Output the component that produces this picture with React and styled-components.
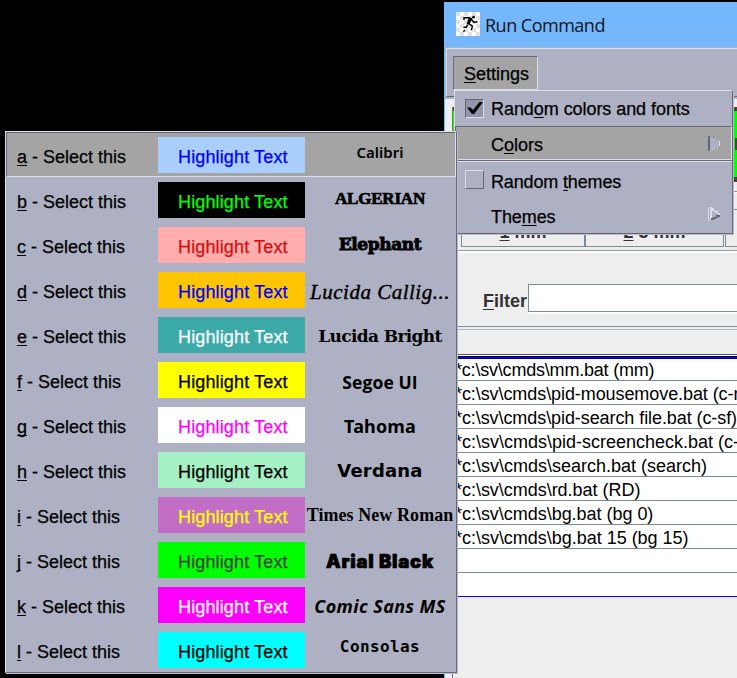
import React from 'react';
import styled, { createGlobalStyle } from 'styled-components';

const GlobalStyle = createGlobalStyle`
  * { box-sizing: border-box; }
  html, body { margin: 0; padding: 0; background: #000; overflow: hidden; }
`;

const face = '#aeb1c3';
const light = '#dcdde6';
const dark = '#666877';
const steel = '#7a8a99';

const Desktop = styled.main`
  position: relative;
  width: 737px;
  height: 678px;
  overflow: hidden;
  background: #000;
  color: #000;
  font: 18px/20px "Liberation Sans", Arial, sans-serif;
  white-space: pre;
`;

const AppWindow = styled.section`
  position: absolute;
  left: 444px;
  top: 2px;
  width: 320px;
  height: 690px;
  display: flex;
  flex-direction: column;
  border-left: 1px solid #74b7fd;
  background: #eee;
`;

const TitleBar = styled.header`
  flex: 0 0 45px;
  display: flex;
  align-items: flex-start;
  gap: 5px;
  padding: 10px 0 0 11px;
  background: #74b7fd;
`;

const Title = styled.span`
  margin-top: 1px;
  font: 18px/24px "Open Sans", sans-serif;
  letter-spacing: -0.5px;
  color: #10151c;
`;

const MenuBar = styled.nav`
  flex: 0 0 52px;
  padding: 1px 0 2px 1px;
  background: ${face};
`;

const MenuBarInner = styled.div`
  height: 49px;
  padding: 7px 0 0 6px;
  border-top: 1px solid ${light};
  border-left: 1px solid ${light};
  border-bottom: 1px solid ${dark};
`;

const MenuButton = styled.div`
  width: 85px;
  height: 34px;
  padding: 7px 0 0 10px;
  border: 1px solid;
  border-color: ${dark} ${light} ${light} ${dark};
  background: #a4a4a4;
  -webkit-text-stroke: 0.25px;
`;

const Mnemonic = styled.span`
  text-decoration: underline 1px;
  text-underline-offset: 2px;
  text-decoration-skip-ink: none;
`;

const Body = styled.div`
  flex: 1;
  margin: 8px 0 0 7px;
  border-left: 1px solid #777;
  display: flex;
  flex-direction: column;
`;

const CommandBand = styled.div`
  flex: 0 0 75px;
  display: flex;
  align-items: center;
  padding-left: 282px;
  background: #00ff00;
  border-top: 4px solid #444;
  border-bottom: 5px solid #444;
`;

const BandField = styled.div`
  width: 40px;
  height: 12px;
  background: #444;
`;

const ButtonRow = styled.div`
  flex: 0 0 60px;
  margin-top: 9px;
  padding: 17px 0 0 8px;
  display: flex;
  border-top: 1px solid #999;
  border-bottom: 1px solid #999;
  box-shadow: inset 0 1px #fff, 0 2px #fff;
`;

const GroupButton = styled.button`
  flex: 0 0 ${p => p.$width}px;
  height: 38px;
  margin: 0 ${p => p.$gap || 0}px 0 0;
  padding: 8px 0 0;
  border: 1px solid ${steel};
  background: #eee;
  color: #333;
  font: bold 18px/20px "Liberation Sans", Arial, sans-serif;
`;

const FilterRow = styled.label`
  flex: 0 0 74px;
  display: flex;
  align-items: flex-start;
  padding: 31px 0 0 30px;
  margin-top: 2px;
  border-bottom: 1px solid ${steel};
  color: #333;
  font-weight: bold;
`;

const FilterText = styled.span`
  width: 45px;
  margin-top: 7px;
`;

const FilterField = styled.span`
  width: 230px;
  height: 28px;
  border: 1px solid ${steel};
  background: #fff;
  box-shadow: 0 2px #fff;
`;

const TableHead = styled.div`
  flex: 0 0 26px;
  margin-top: 2px;
  border-top: 1px solid #aeb8c5;
  border-bottom: 1px solid #555;
`;

const Table = styled.div`
  margin-top: 1px;
  border-top: 1px solid #000;
  border-bottom: 1px solid #0000ff;
  background: #fff;
  box-shadow: inset 0 2px #0000f0, 0 -1px #fff;
`;

const TableRow = styled.div`
  height: 24px;
  padding: 3px 0 0 2px;
  border-bottom: 1px solid ${steel};
  letter-spacing: ${p => p.$track}px;
  &:last-child { height: 23px; border-bottom: 0; }
`;

const Popup = styled.div`
  position: absolute;
  left: ${p => p.$x}px;
  top: ${p => p.$y}px;
  width: ${p => p.$w}px;
  height: ${p => p.$h}px;
  border: 1px solid;
  border-color: ${light} ${dark} ${dark} ${light};
  box-shadow: 1px 1px #b9bbc8;
  background: ${face};
  -webkit-text-stroke: 0.25px;
`;

const MenuItem = styled.div`
  height: ${p => p.$h}px;
  display: flex;
  align-items: center;
  padding: 0 10px 0 9px;
  border: 1px solid;
  border-color: ${p => (p.$active ? `${dark} ${light} ${light} ${dark}` : 'transparent')};
  background: ${p => (p.$active ? '#a4a4a4' : 'transparent')};
`;

const MenuLabel = styled.span`
  flex: 1;
  padding-top: ${p => p.$drop || 0}px;
  letter-spacing: ${p => p.$track || 0}px;
`;

const CheckSlot = styled.span`
  flex: 0 0 26px;
  height: 20px;
`;

const CheckBox = styled.span`
  display: block;
  width: 19px;
  height: 19px;
  border: 1px solid;
  border-color: ${p => (p.$on ? `${dark} ${light} ${light} ${dark}` : `${light} ${dark} ${dark} ${light}`)};
  background: ${p => (p.$on ? '#9294a7' : face)};
  svg { display: block; }
`;

const Separator = styled.div`
  height: 2px;
  border-top: 1px solid ${dark};
  border-bottom: 1px solid ${light};
`;

const SchemeRow = styled.div`
  height: 45px;
  display: grid;
  grid-template-columns: 151px 147px 150px;
  padding-top: 4px;
  border: 1px solid;
  border-color: ${p => (p.$active ? `${dark} ${light} ${light} ${dark}` : 'transparent')};
  background: ${p => (p.$active ? '#a4a4a4' : 'transparent')};
`;

const SchemeName = styled.span`
  padding: 10px 0 0 10px;
`;

const Swatch = styled.span`
  height: 36px;
  padding: 10px 0 0 20px;
  background: ${p => p.$bg};
  color: ${p => p.$fg};
  letter-spacing: 0.14px;
`;

const FontSample = styled.span`
  height: 36px;
  display: flex;
  justify-content: center;
  padding-top: ${p => p.$top}px;
  font: ${p => p.$font};
  letter-spacing: ${p => p.$track}px;
  -webkit-text-stroke: ${p => p.$stroke || 0}px;
`;

const RunnerIcon = () => (
  <svg width="24" height="24" viewBox="0 0 24 24">
    <defs>
      <pattern id="check" width="8" height="8" patternUnits="userSpaceOnUse">
        <rect width="8" height="8" fill="#fff" />
        <rect width="4" height="4" fill="#e2e2e2" />
        <rect x="4" y="4" width="4" height="4" fill="#e2e2e2" />
      </pattern>
    </defs>
    <rect width="24" height="24" fill="url(#check)" />
    <circle cx="17.6" cy="5.2" r="1.4" />
    <path d="M8 8V5.8h5l3 1M15.5 7.5l2.3 2.8 3.7-.6M12.5 11.5l4 2.6-1.3 4.2M11.5 12.5 10.5 15.3H7.5M9 18.3l-1.8 1.2" fill="none" stroke="#000" strokeWidth="1.4" />
    <path d="m12.5 6 4 .5-3.2 6-2.6-.5z" />
  </svg>
);

const Tick = () => (
  <svg width="17" height="17" viewBox="0 0 17 17">
    <path d="M1 7.5h3.5L7 10l6.5-8H17L8 14H6z" fill="#000" />
  </svg>
);

const Arrow = ({ active }) => (
  <svg width="13" height="15" viewBox="0 0 13 15" shapeRendering="crispEdges">
    {active ? (
      <>
        <path d="M0 0h3v1h3v1h3v1h2v2h1v5h-1v1H9v1H6v1H3v2H0z" fill={face} />
        <path d="M0 0h2v15H0zM5 1h1v1H5zM8 3h1v1H8z" fill={dark} />
        <path d="M2 14h1v1H2zM4 13h1v1H4zM6 12h1v1H6zM9 11h1v1H9zM11 5h1v5h-1z" fill={light} />
      </>
    ) : (
      <>
        <path d="M0 0h1v14H0zM2 0h2v1h2v2h2v1h2v2h2v2H2z" fill={light} />
        <path d="M2 6h5v3H4v4H2z" fill={light} />
        <path d="M4 4h3v2h3v2H7v2H4z" fill={face} />
        <path d="M3 11h2v-1h3V8h4v2h-2v1H8v1H6v1H3z" fill={dark} />
      </>
    )}
  </svg>
);

const commands = [
  { text: '*c:\\sv\\cmds\\mm.bat (mm)', track: -0.2 },
  { text: '*c:\\sv\\cmds\\pid-mousemove.bat (c-m)', track: -0.08 },
  { text: '*c:\\sv\\cmds\\pid-search file.bat (c-sf)', track: -0.08 },
  { text: '*c:\\sv\\cmds\\pid-screencheck.bat (c-s)', track: 0 },
  { text: '*c:\\sv\\cmds\\search.bat (search)', track: 0 },
  { text: '*c:\\sv\\cmds\\rd.bat (RD)', track: -0.03 },
  { text: '*c:\\sv\\cmds\\bg.bat (bg 0)', track: -0.03 },
  { text: '*c:\\sv\\cmds\\bg.bat 15 (bg 15)', track: -0.02 },
  { text: '', track: 0 },
  { text: '', track: 0 },
];

const schemes = [
  { k: 'a', bg: '#aacfff', fg: '#0000ff', name: 'Calibri', font: '600 15px/20px "Noto Sans", sans-serif', top: 5, track: 0 },
  { k: 'b', bg: '#000', fg: '#00ff00', name: 'ALGERIAN', font: 'bold 17px/20px "Liberation Serif", serif', top: 7, track: -0.2, stroke: 0.7 },
  { k: 'c', bg: '#ffadad', fg: '#d31010', name: 'Elephant', font: '900 17px/20px "DejaVu Serif", serif', top: 7, track: -0.4, stroke: 0.9 },
  { k: 'd', bg: '#ffc600', fg: '#0000ff', name: 'Lucida Callig...', font: 'italic 21px/22px "Liberation Serif", serif', top: 9, track: 0.5, stroke: 0.4 },
  { k: 'e', bg: '#3caaa8', fg: '#fff', name: 'Lucida Bright', font: 'bold 17px/20px "DejaVu Serif", serif', top: 9, track: -0.65 },
  { k: 'f', bg: '#ffff00', fg: '#000', name: 'Segoe UI', font: 'bold 17.5px/20px "Open Sans", sans-serif', top: 10, track: 0.1 },
  { k: 'g', bg: '#fff', fg: '#ff00ff', name: 'Tahoma', font: 'bold 18px/20px "Noto Sans", sans-serif', top: 9, track: 0.15 },
  { k: 'h', bg: '#a5f0c4', fg: '#000', name: 'Verdana', font: 'bold 18px/20px "DejaVu Sans", sans-serif', top: 9, track: 0.2 },
  { k: 'i', bg: '#c26dc6', fg: '#ffff00', name: 'Times New Roman', font: 'bold 18px/20px "Liberation Serif", serif', top: 8, track: 0.07 },
  { k: 'j', bg: '#00ff00', fg: '#444', name: 'Arial Black', font: '900 18.5px/20px Inter, sans-serif', top: 9, track: 0.75, stroke: 0.7 },
  { k: 'k', bg: '#ff00ff', fg: '#fff', name: 'Comic Sans MS', font: 'italic bold 18px/20px "Open Sans", sans-serif', top: 9, track: 0.4 },
  { k: 'l', bg: '#00ffff', fg: '#000', name: 'Consolas', font: 'bold 16px/20px "DejaVu Sans Mono", monospace', top: 5, track: 0.4 },
];

export default function App() {
  return (
    <Desktop>
      <GlobalStyle />
      <AppWindow>
        <TitleBar><RunnerIcon /><Title>Run Command</Title></TitleBar>
        <MenuBar>
          <MenuBarInner>
            <MenuButton><Mnemonic>S</Mnemonic>ettings</MenuButton>
          </MenuBarInner>
        </MenuBar>
        <Body>
          <CommandBand><BandField /></CommandBand>
          <ButtonRow>
            <GroupButton $width={124}><Mnemonic>1</Mnemonic> mm</GroupButton>
            <GroupButton $width={139} $gap={1}><Mnemonic>2</Mnemonic> 3 mm</GroupButton>
            <GroupButton $width={124} />
          </ButtonRow>
          <FilterRow>
            <FilterText><Mnemonic>F</Mnemonic>ilter</FilterText>
            <FilterField />
          </FilterRow>
          <TableHead />
          <Table>
            {commands.map((c, i) => <TableRow key={i} $track={c.track}>{c.text}</TableRow>)}
          </Table>
        </Body>
      </AppWindow>

      <Popup $x={454} $y={90} $w={279} $h={144}>
        <MenuItem $h={35}>
          <CheckSlot><CheckBox $on><Tick /></CheckBox></CheckSlot>
          <MenuLabel $drop={1} $track={-0.06}>Rand<Mnemonic>o</Mnemonic>m colors and fonts</MenuLabel>
        </MenuItem>
        <MenuItem $h={34} $active>
          <CheckSlot />
          <MenuLabel $drop={3}>C<Mnemonic>o</Mnemonic>lors</MenuLabel>
          <Arrow active />
        </MenuItem>
        <Separator />
        <MenuItem $h={35}>
          <CheckSlot><CheckBox /></CheckSlot>
          <MenuLabel $drop={4} $track={-0.15}>Random <Mnemonic>t</Mnemonic>hemes</MenuLabel>
        </MenuItem>
        <MenuItem $h={35}>
          <CheckSlot />
          <MenuLabel $drop={4} $track={-0.1}>The<Mnemonic>m</Mnemonic>es</MenuLabel>
          <Arrow />
        </MenuItem>
      </Popup>

      <Popup $x={5} $y={131} $w={452} $h={542}>
        {schemes.map((s, i) => (
          <SchemeRow key={s.k} $active={i === 0}>
            <SchemeName><Mnemonic>{s.k}</Mnemonic> - Select this</SchemeName>
            <Swatch $bg={s.bg} $fg={s.fg}>Highlight Text</Swatch>
            <FontSample $font={s.font} $top={s.top} $track={s.track} $stroke={s.stroke}>{s.name}</FontSample>
          </SchemeRow>
        ))}
      </Popup>
    </Desktop>
  );
}
